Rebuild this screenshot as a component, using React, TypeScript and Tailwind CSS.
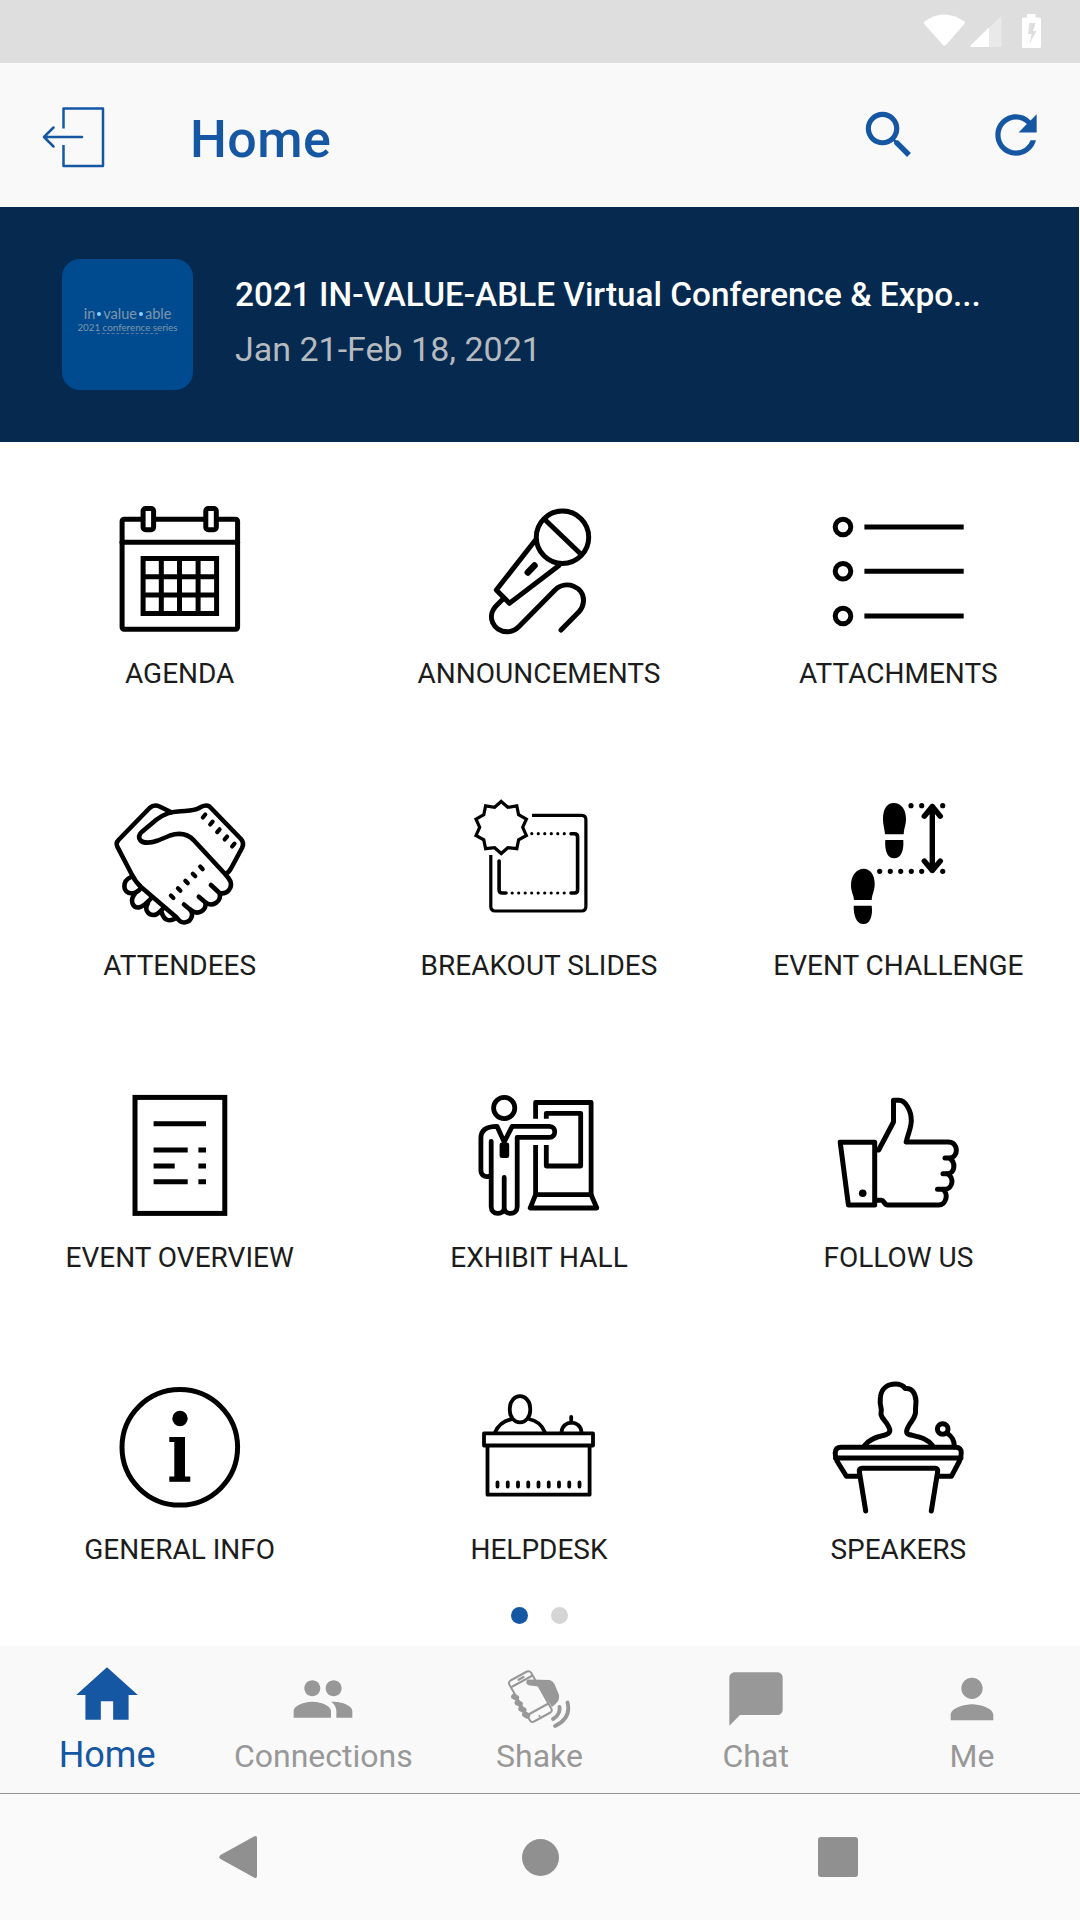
import { useState } from 'react';
import type { ReactNode } from 'react';
import { MdChatBubble, MdHome, MdPeople, MdPerson, MdRefresh, MdSearch } from 'react-icons/md';

function LineIcon({ children, width = 5 }: { children: ReactNode; width?: number }) {
  return (
    <svg viewBox="0 0 144 144" className="size-36" fill="none" stroke="#000" strokeWidth={width} strokeLinecap="round" strokeLinejoin="round">
      {children}
    </svg>
  );
}

const AgendaIcon = () => (
  <LineIcon>
    <rect x="14.1" y="21.2" width="115.5" height="110" rx="2" />
    <path d="M14 44.3H129.6" />
    <g fill="#fff">
      <rect x="35.1" y="10.5" width="10.5" height="21.3" rx="2.5" />
      <rect x="97.8" y="10.5" width="10.5" height="21.3" rx="2.5" />
    </g>
    <path strokeLinejoin="miter" d="M35.1 60.5H108.6V115.5H35.1ZM53.3 60.5V115.5M71.5 60.5V115.5M90.1 60.5V115.5M35.1 78.7H108.6M35.1 97H108.6" />
  </LineIcon>
);

const AnnouncementsIcon = () => (
  <LineIcon>
    <circle cx="95.5" cy="39.3" r="26.2" />
    <path d="M77.5 21.3L113.7 56M68.5 42L29.3 92L42.4 105.3L92 67.5" />
    <path strokeWidth="6.5" d="M67.5 67.5L60.8 74.5" />
    <path d="M37 100L29.5 107.5C19 118 26 133.7 40.4 133.7Q47 133.7 52 128.5L88.5 91.5C99 82 117 88.5 116.5 103Q116 109.5 112 113.7L94 132" />
  </LineIcon>
);

const AttachmentsIcon = () => (
  <LineIcon>
    <circle cx="17" cy="29" r="7.8" />
    <circle cx="17" cy="73.3" r="7.8" />
    <circle cx="17" cy="118" r="7.8" />
    <path strokeLinecap="butt" d="M38.4 29H137.7M38.4 73.3H137.7M38.4 118H137.7" />
  </LineIcon>
);

const AttendeesIcon = () => (
  <LineIcon width={4.6}>
    <path d="M63.3 22.3L51.5 16.5Q46 14 41.6 18L10.5 50Q7.5 53 9.5 57L23.7 84.3Q27 91.5 33.3 97.3L68.4 127.3C71 131 73.5 132.8 76.5 132.5C83 132 86.5 124.5 82 119.5L76 114.5" />
    <path d="M82 119.5C90 126.5 100 119.5 97 112L90.8 106.7M97 112C104 118 114 111.5 111.5 103L102.9 95M111.5 103C119 105 124.5 98 122.5 91.5Q121 88 117.3 84.3L86 50.5C79 43 71 42.5 62 45.5L50 50.5C43 53 35.5 53.5 32.5 50.5Q29 46.5 34 41.7L48 30C58 22.5 64 22 70 21.5C80 20.5 86 21 91 18Q97.5 14 101.5 16.5L133 49Q136.5 53 134 58L123.5 77.5Q121 82.5 117.3 84.3" />
    <path d="M23 87C14 91 14 103 24 103.5Q29 103 33 98M27 103.5C21 111 25 118 31 117.5Q35 117 43.5 108M40 113C35 121 42 126.5 48 124.5Q50.5 123.5 55.5 118M53.5 122C56 130.5 61 132 67.5 128.5" />
    <path strokeWidth="4.2" d="M97.3 24.5L94.8 27.5M104.6 31.7L102.2 34.5M111.6 39.3L109.2 42.1M119.1 46.6L116.7 49.4M126.5 53.7L124.1 56.5M92.2 76.5L94.7 79.2M84.8 83.7L87.3 86.3M77.3 90.7L79.8 93.3M69.9 98.2L72.4 100.7M62.9 105.5L65.4 108" />
  </LineIcon>
);

const BreakoutIcon = () => (
  <LineIcon width={3.2}>
    <path
      strokeLinejoin="miter"
      d="M34.2 11.5L40.8 17.3L49.8 15.9L51.6 24.7L59.4 29.1L55.7 37.3L59.4 45.5L51.6 49.9L49.8 58.7L40.8 57.7L34.2 63.5L27.6 57.7L18.6 58.7L16.8 49.9L9 45.5L12.7 37.3L9 29.1L16.8 24.7L18.6 15.9L27.6 17.3Z"
    />
    <path strokeLinecap="butt" d="M65 25.3H114.5Q118.9 25.3 118.9 29.7V116.6Q118.9 121 114.5 121H28.2Q23.8 121 23.8 116.6V65" />
    <path strokeWidth="3.6" d="M104 43.7H107.5Q110.6 43.7 110.6 47V99.7Q110.6 103 107.5 103H104M32.1 71V99.7Q32.1 103 35.3 103H39" />
    <path strokeDasharray="0 6.5" d="M64.8 43.7H98M45.2 103H98" />
  </LineIcon>
);

const ChallengeIcon = () => (
  <LineIcon>
    <g fill="#000" stroke="none">
      <path d="M59 44.2C58.5 38 57 35 57 29C57 19 61 13 67.5 13C75 13 80 19 80 29C80 35 78 38 77.7 44.2Z" />
      <path d="M59.3 50H77.3C78 61 75 68.3 68 68.3C61.5 68.3 58.5 61 59.3 50Z" />
      <path d="M28 110C27.5 104 25 102 25 95C25 85 31 78.7 37.7 78.7C44.5 78.7 48.7 85 48.7 94C48.7 101 46 104 45.7 110Z" />
      <path d="M27.7 115.7H45.7C47 126 44 134 37.5 134C30.5 134 27.5 126 27.7 115.7Z" />
    </g>
    <path strokeWidth="5.2" d="M85 15.7h.01M95.7 15.7h.01M116.7 15.7h.01M53.7 81.3h.01M64.3 81.3h.01M74.7 81.3h.01M85.3 81.3h.01M95.7 81.3h.01M116.7 81.3h.01" />
    <path strokeWidth="5.4" d="M106.3 16.5V80.5M98.3 26.2L106.3 16.5L114.3 26.2M98.3 71L106.3 80.5L114.3 71" />
  </LineIcon>
);

const OverviewIcon = () => (
  <LineIcon>
    <rect x="27" y="15.4" width="89.8" height="116" strokeLinejoin="miter" />
    <path strokeLinecap="butt" d="M45.6 41.7H98M45.6 68H79.7M90.4 68H98M45.6 84H66.7M90.4 84H98M45.6 99.7H79.7M90.4 99.7H98" />
  </LineIcon>
);

const ExhibitIcon = () => (
  <LineIcon width={4.8}>
    <circle cx="37.2" cy="26" r="10.6" />
    <path d="M21.5 94.5C16.5 95 13.9 92.5 13.9 88V56C13.9 48 20 44.3 30 44.3L37.2 60L45.2 44.3H82.5C89.5 44.3 89.5 55.3 82.5 55.3H50.2V124.7C50.2 133.5 37.2 133.5 37.2 126V95.5M24.2 59.5V124.7C24.2 133.5 37.2 133.5 37.2 126" />
    <rect x="35" y="63" width="4.8" height="10.7" fill="#000" />
    <path strokeLinecap="butt" d="M68.6 36.7V20.5H124.1V112.7H68.6V63M79.3 36.7V31.3H113.7V84H79.3V63" />
    <path d="M68.6 112.7L63.2 126H129.8L124.1 112.7" />
  </LineIcon>
);

const FollowIcon = () => (
  <LineIcon>
    <path d="M14.2 60.2H48.7V123H22.4Z" />
    <circle cx="36.7" cy="111.3" r="3.8" fill="#000" stroke="none" />
    <path d="M50.5 68H52.7L67.5 40V18.3H73C79 18.3 85.3 28 85.3 38.5C85.3 46 82 51.5 80.2 60H122C133 60 133 76 123 76H119M123 76C130 79.5 129.5 91.7 121 91.7H117M121 91.7C128.5 95 127.5 107.3 118 107.3H111.5M116.5 107.3C123 111 120.5 123 112.5 123H61.5C58.5 123 58 118.3 55.5 118.3H50.5" />
  </LineIcon>
);

const InfoIcon = () => (
  <LineIcon>
    <circle cx="71.8" cy="73.3" r="57.8" />
    <g fill="#000" stroke="none">
      <circle cx="72" cy="44.5" r="7.7" />
      <rect x="66.3" y="63" width="10.7" height="42" />
      <rect x="61.3" y="63" width="8" height="5" />
      <rect x="61.3" y="102.5" width="21" height="5.3" />
    </g>
  </LineIcon>
);

const HelpdeskIcon = () => (
  <LineIcon width={3.8}>
    <rect x="42.8" y="22.2" width="20.4" height="26.2" rx="10.2" ry="12" />
    <path strokeLinecap="butt" d="M28 58.5Q33 47 45.5 45M61.5 45Q73.5 47 78 58.5M94.5 58C95.5 45.5 113.5 45.5 114.5 58" />
    <path d="M104.2 43V48.5M17 59.3H126V71.5H17ZM20.5 71.5V120.7H122.6V71.5" />
    <path d="M30.5 108.5v4M40.75 108.5v4M51 108.5v4M61.25 108.5v4M71.5 108.5v4M81.75 108.5v4M92 108.5v4M102.25 108.5v4M112.5 108.5v4" />
  </LineIcon>
);

const SpeakersIcon = () => (
  <LineIcon width={5}>
    <path d="M38.7 71.5C43 65 52 62.5 59 61C64 59.5 65 57 62.5 52.5C60 47 56.5 46 55 40.5L55.3 35.5Q53.5 29 54.4 23C55.5 14 62 10 69.4 10C74.5 10 77.5 12 79.3 14.5C86 13.5 89.5 19.5 90 27L89.5 35.5C90.5 43 86 46 83.5 50.5C80 56 79.5 59.5 83 60.5C93 63 101 64 106.4 71.5" />
    <circle cx="116.7" cy="55" r="5.3" />
    <path d="M121.5 59.5Q128.5 64 128.4 73" />
    <path d="M15 73.3H129.5Q135.5 73.3 135.2 79Q135.2 84 133.5 87L125.4 102.3H113M32.5 102.3H20.4L11 87Q9.2 84 9.2 79Q9.5 73.3 15 73.3M9.5 84H135" />
    <path d="M39.7 137L33.3 97.5Q33 94.3 36 94.3H109.2Q112 94.3 111.7 97.5L105.3 137" />
  </LineIcon>
);

const ShakeIcon = () => (
  <svg viewBox="0 0 64 64" className="size-16" fill="none" stroke="currentColor" strokeWidth="2" strokeLinecap="round" strokeLinejoin="round">
    <path d="M20 4.5L3.5 13.5Q1.3 15 2.3 17.5L23 53.5Q24.5 56 27 54.5L43.5 45.5Q45.5 44 44.5 42L24 5.5Q22.5 3.5 20 4.5ZM5.5 19.5L25.5 8.5M21.5 47.5L40.5 37" />
    <path d="M11.5 12.8L16.5 10M32.5 49h.01" strokeWidth="2.2" />
    <path fill="currentColor" stroke="none" d="M19.5 14Q19.5 12 22.5 12.5L42.5 13Q45.5 13.5 47.5 17L52 28Q53 33 48.5 37L45 40L31.5 19.5L22.5 18.5Q18.5 17.5 19.5 14Z" />
    <path strokeWidth="5.8" d="M7 29.5L9.3 30.7M10.5 35.7L13 37M14.2 41.7L16.6 43M18 47.3L20.2 48.7" />
    <path strokeWidth="3.8" d="M52.5 40Q53.5 47.5 46 52M60.5 35.5Q64.5 51 48 59" />
  </svg>
);

const items = [
  { label: 'AGENDA', icon: <AgendaIcon /> },
  { label: 'ANNOUNCEMENTS', icon: <AnnouncementsIcon /> },
  { label: 'ATTACHMENTS', icon: <AttachmentsIcon /> },
  { label: 'ATTENDEES', icon: <AttendeesIcon /> },
  { label: 'BREAKOUT SLIDES', icon: <BreakoutIcon /> },
  { label: 'EVENT CHALLENGE', icon: <ChallengeIcon /> },
  { label: 'EVENT OVERVIEW', icon: <OverviewIcon /> },
  { label: 'EXHIBIT HALL', icon: <ExhibitIcon /> },
  { label: 'FOLLOW US', icon: <FollowIcon /> },
  { label: 'GENERAL INFO', icon: <InfoIcon /> },
  { label: 'HELPDESK', icon: <HelpdeskIcon /> },
  { label: 'SPEAKERS', icon: <SpeakersIcon /> },
];

const tabs = [
  { label: 'Home', icon: <MdHome size={74} /> },
  { label: 'Connections', icon: <MdPeople size={64} /> },
  { label: 'Shake', icon: <ShakeIcon /> },
  { label: 'Chat', icon: <MdChatBubble size={64} /> },
  { label: 'Me', icon: <MdPerson size={64} /> },
];

function StatusBar() {
  return (
    <div className="h-[63px] bg-[#dedede] flex justify-end pr-[38px]">
      <svg viewBox="0 0 120 63" className="w-[120px] h-[63px]" fill="#fff">
        <path d="M2.5 21.5Q22 7.5 42.5 21.5Q43.5 22.5 42.5 23.7L24 45Q22.5 46.5 21 45L2 23.7Q1.2 22.5 2.5 21.5Z" />
        <path fillOpacity="0.35" d="M79.5 16V45.5Q79.5 47 78 47H66V29Z" />
        <path d="M67 27.5V47H50Q47.5 47 49 45Z" />
        <path fillRule="evenodd" d="M105 14H113.5V17.5H117.5Q119 17.5 119 19V46.5Q119 48 117.5 48H101.5Q100 48 100 46.5V19Q100 17.5 101.5 17.5H105ZM107.5 23L106 34H109.5L107.5 44L114.5 31H111L113.5 23Z" />
      </svg>
    </div>
  );
}

export default function App() {
  const [activeTab, setActiveTab] = useState('Home');

  return (
    <div className="w-[1080px] h-[1920px] flex flex-col bg-white overflow-hidden font-[Roboto,sans-serif]">
      <StatusBar />

      <header className="h-36 bg-[#f9f9f9] flex items-center pt-px pl-[42px] pr-[33px] text-[#1557a3]">
        <svg viewBox="0 0 64 64" className="size-16" fill="none" stroke="currentColor" strokeWidth="2.5" strokeLinecap="round" strokeLinejoin="round">
          <path strokeLinecap="butt" d="M21.5 24.5V4.5H61V62H21.5V41" />
          <path d="M40 33H2.5M11.5 23.5L2 33L11.5 42.5" />
        </svg>
        <h1 className="ml-[84px] mt-2 text-[52px] font-medium tracking-[0.4px]">Home</h1>
        <button className="ml-auto mb-px"><MdSearch size={62} /></button>
        <button className="ml-[65px] mb-px"><MdRefresh size={62} /></button>
      </header>

      <section className="w-[1079px] h-[235px] bg-[#05294f] flex items-center pl-[62px]">
        <div className="size-[131px] rounded-[18px] bg-[#004b90] flex flex-col items-center pt-[47px] text-[#8195a9]">
          <div className="flex items-center text-[14.5px] leading-[16px] font-[Lato,sans-serif]">
            in<i className="size-1 mx-[2px] rounded-full bg-[#8fd0ff]" />value<i className="size-1 mx-[2px] rounded-full bg-[#8fd0ff]" />able
          </div>
          <div className="text-[9.8px] leading-[10px] whitespace-nowrap font-[Lato,sans-serif]">2021 conference series</div>
          <div className="mt-px w-[61px] border-t border-dashed border-[#4f7ba6]" />
        </div>
        <div className="ml-[42px] -mt-[5px]">
          <div className="text-[33.35px] leading-[44px] font-medium text-white whitespace-nowrap">2021 IN-VALUE-ABLE Virtual Conference &amp; Expo...</div>
          <div className="mt-[10px] text-[34px] leading-[44px] text-[#b4babf]">Jan 21-Feb 18, 2021</div>
        </div>
      </section>

      <main className="h-[1204px] pt-14">
        <div className="w-[1078px] grid grid-cols-3 gap-y-24">
          {items.map(item => (
            <button key={item.label} className="h-[196px] flex flex-col items-center">
              {item.icon}
              <span className="mt-[13px] text-[28px] leading-[38px] text-[#1c1c1c] whitespace-nowrap">{item.label}</span>
            </button>
          ))}
        </div>
        <div className="w-[1078px] mt-[37px] flex justify-center gap-[23px]">
          <span className="size-[17px] rounded-full bg-[#1557a3]" />
          <span className="size-[17px] rounded-full bg-[#d5d5d5]" />
        </div>
      </main>

      <nav className="h-[148px] bg-[#f9f9f9] border-b border-[#8f8f8f]">
        <div className="w-[1081px] -ml-px grid grid-cols-5">
          {tabs.map(tab => (
            <button key={tab.label} onClick={() => setActiveTab(tab.label)} className={`flex flex-col items-center ${activeTab === tab.label ? 'text-[#1557a3]' : 'text-[#989898]'}`}>
              <span className={`h-16 flex items-center ${activeTab === tab.label ? 'mt-[17px]' : 'mt-[21px]'}`}>{tab.icon}</span>
              <span className={activeTab === tab.label ? 'mt-[5px] text-[36px] leading-[46px]' : 'mt-1 text-[32px] leading-[42px]'}>{tab.label}</span>
            </button>
          ))}
        </div>
      </nav>

      <div className="h-[126px] bg-[#fafafa] flex items-center pl-[218px] text-[#909090]">
        <svg viewBox="0 0 40 44" className="w-10 h-11" fill="currentColor">
          <path d="M36 1.5Q39 0 39 3V41Q39 44 36 42.5L2.5 24Q0 22 2.5 20Z" />
        </svg>
        <span className="ml-[264px] size-[37px] rounded-full bg-[#909090]" />
        <span className="ml-[259px] size-10 rounded-[3px] bg-[#909090]" />
      </div>
    </div>
  );
}
